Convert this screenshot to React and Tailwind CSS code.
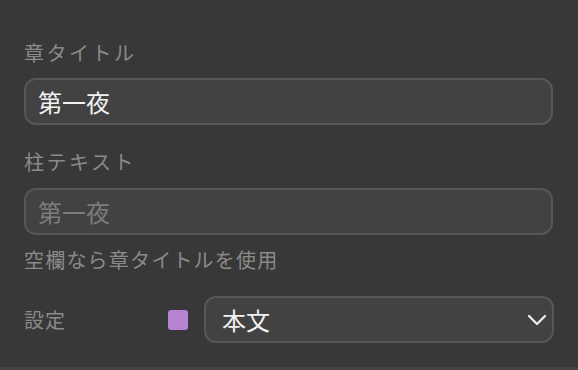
import React from "react";

const font = { fontFamily: '"Noto Sans CJK JP", "Noto Sans", sans-serif' };

function Label({ children, className = "" }) {
  return (
    <div className={"text-[20px] leading-[28px] text-[#8a8a8a] " + className}>
      {children}
    </div>
  );
}

export default function App() {
  return (
    <div style={font} className="w-[578px] h-[370px] bg-[#383838] flex flex-col">
      <div className="flex-1 px-6 pt-[39px] flex flex-col">
        <Label className="tracking-[2.5px]">章タイトル</Label>
        <div className="mt-[11px] h-[47px] w-[529px] rounded-[12px] border-2 border-[#575757] bg-[#424242] px-3 flex items-center">
          <input
            readOnly
            value="第一夜"
            className="w-full bg-transparent outline-none text-[24px] text-[#f2f2f2]"
            style={font}
          />
        </div>

        <Label className="mt-[23px] tracking-[2.5px]">柱テキスト</Label>
        <div className="mt-[12px] h-[47px] w-[529px] rounded-[12px] border-2 border-[#575757] bg-[#424242] px-3 flex items-center">
          <input
            readOnly
            placeholder="第一夜"
            className="w-full bg-transparent outline-none text-[24px] text-[#f2f2f2] placeholder:text-[#7c7c7c]"
            style={font}
          />
        </div>

        <Label className="mt-[11px] tracking-[1.2px]">空欄なら章タイトルを使用</Label>

        <div className="mt-[22px] flex items-center">
          <Label className="w-[144px] tracking-[1px]">設定</Label>
          <div className="w-5 h-5 rounded-[3px] bg-[#b784d4] mr-4" />
          <div className="h-[47px] flex-1 rounded-[12px] border-2 border-[#575757] bg-[#424242] pl-4 pr-[5px] flex items-center justify-between">
            <span className="text-[24px] text-[#f2f2f2]">本文</span>
            <svg width="20" height="12" viewBox="0 0 20 12" fill="none">
              <polyline
                points="2,2 10,10 18,2"
                stroke="#f2f2f2"
                strokeWidth="2.2"
                strokeLinecap="round"
                strokeLinejoin="round"
              />
            </svg>
          </div>
        </div>
      </div>
      <div className="h-[3px] bg-[#444444]" />
    </div>
  );
}
